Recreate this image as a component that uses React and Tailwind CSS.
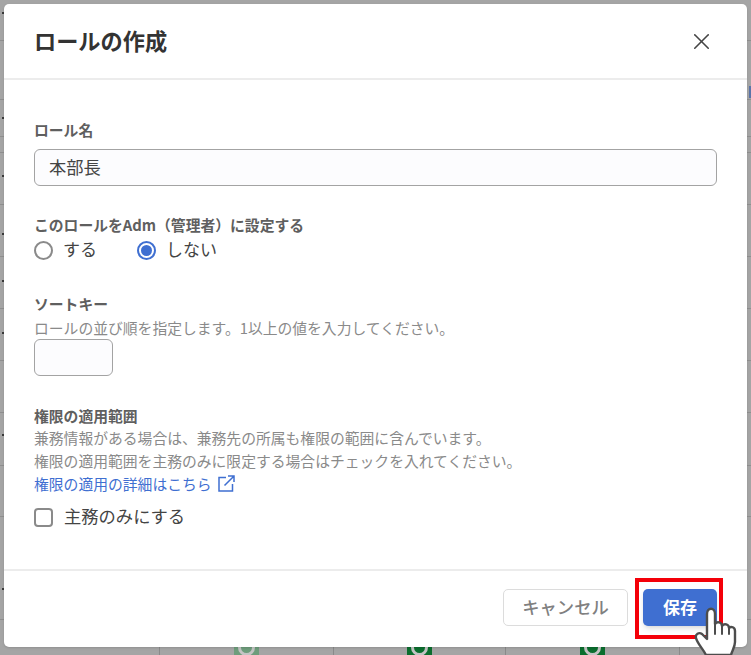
import { X } from "lucide-react";

const FONT = "[font-family:'Noto_Sans_CJK_JP','Noto_Sans',sans-serif]";
const ROW_LINES = [40, 99, 136, 152, 204, 256, 308, 360, 412, 465, 516, 619];
const MARKS = [12, 117, 175, 233, 280, 332, 434, 588];
const BADGES = [
  { left: "left-[234px]", color: "bg-[#6e9d7c]" },
  { left: "left-[407px]", color: "bg-[#0b6e2e]" },
  { left: "left-[580px]", color: "bg-[#0b6e2e]" },
];
const COLS = ["left-[159px]", "left-[333px]", "left-[505px]", "left-[679px]"];

function Label({ children }) {
  return <div className="text-[14.8px] leading-[20px] font-bold text-[#5f5f5f]">{children}</div>;
}

function Radio({ checked, label }) {
  return (
    <label className="flex items-center gap-[10px]">
      {checked ? (
        <span className="w-[19px] h-[19px] rounded-full border-2 border-[#3f6fd1] flex items-center justify-center">
          <span className="w-[11px] h-[11px] rounded-full bg-[#3f6fd1]" />
        </span>
      ) : (
        <span className="w-[19px] h-[19px] rounded-full border-2 border-[#8a8a8a]" />
      )}
      <span className="text-[17px] leading-[24px] text-[#444] -mt-[2px]">{label}</span>
    </label>
  );
}

function HandCursor() {
  return (
    <svg className="absolute left-[694px] top-[605px]" width="44" height="50" viewBox="0 0 44 50">
      <path
        d="M12 50 C9 44 3 38 2 33 C1 29 5 27 8 29 L13 34 L13 9 C13 2 21 2 21 9 L21 19 C23 16 28 17 28 21 C30 18 35 19 35 23 C37 21 41 22 41 26 L41 37 C41 42 38 46 37 50 Z"
        fill="#fff"
        stroke="#4d4d4d"
        strokeWidth="2.4"
        strokeLinejoin="round"
      />
      <path d="M21 19 V29 M28 21 V29 M35 23 V29" fill="none" stroke="#4d4d4d" strokeWidth="2" strokeLinecap="round" />
    </svg>
  );
}

function Backdrop() {
  return (
    <>
      {ROW_LINES.map((y) => (
        <div key={y} className="absolute left-0 w-full h-px bg-[#8f8f8f]" style={{ top: y }} />
      ))}
      {MARKS.map((y) => (
        <div key={y} className="absolute left-[2px] w-[2px] h-[2px] bg-[#3a3a3a]" style={{ top: y }} />
      ))}
      <div className="absolute left-[749px] top-[86px] w-[2px] h-[12px] bg-[#5a74a8]" />
      {COLS.map((left) => (
        <div key={left} className={`absolute ${left} top-[647px] w-px h-[8px] bg-[#8a8a8a]`} />
      ))}
      {BADGES.map((b) => (
        <div key={b.left} className={`absolute ${b.left} top-[647px] w-[25px] h-[8px] overflow-hidden ${b.color}`}>
          <div className="absolute left-[4px] -top-[8px] w-[17px] h-[17px] rounded-full border-[3px] border-[#c4c4c4]" />
        </div>
      ))}
    </>
  );
}

export default function App() {
  return (
    <div className={`relative w-[751px] h-[655px] overflow-hidden bg-[#a5a5a5] pt-[4px] pl-[4px] ${FONT}`}>
      <Backdrop />

      <div className="relative w-[743px] h-[643px] bg-white rounded-[5px] flex flex-col shadow-sm">
        <div className="h-[76px] shrink-0 border-b-2 border-[#ececec] flex items-center justify-between pl-[30px] pr-[32px]">
          <h1 className="text-[22.2px] leading-[30px] font-bold text-[#333] -mt-[3px]">ロールの作成</h1>
          <X size={27} strokeWidth={1.4} className="text-[#444]" />
        </div>

        <div className="flex-1 px-[30px] pt-[40px]">
          <Label>ロール名</Label>
          <div className="mt-[9px] h-[37px] w-[683px] rounded-[6px] border border-[#a3a3a3] bg-[#fcfcfe] pl-[14px] text-[17.3px] leading-[33px] text-[#444]">
            本部長
          </div>

          <div className="mt-[29px]">
            <Label>このロールをAdm（管理者）に設定する</Label>
          </div>
          <div className="flex gap-[40px] mt-[4px]">
            <Radio label="する" />
            <Radio checked label="しない" />
          </div>

          <div className="mt-[33px]">
            <Label>ソートキー</Label>
          </div>
          <p className="mt-[2px] text-[14.8px] leading-[23px] text-[#8a8a8a]">ロールの並び順を指定します。1以上の値を入力してください。</p>
          <div className="h-[37px] w-[79px] rounded-[6px] border border-[#a3a3a3] bg-[#fcfcfe]" />

          <div className="mt-[30px]">
            <Label>権限の適用範囲</Label>
          </div>
          <p className="text-[14.8px] leading-[23px] text-[#8a8a8a]">兼務情報がある場合は、兼務先の所属も権限の範囲に含んでいます。</p>
          <p className="text-[14.8px] leading-[23px] text-[#8a8a8a]">権限の適用範囲を主務のみに限定する場合はチェックを入れてください。</p>
          <a className="flex items-center gap-[6px] text-[14.8px] leading-[23px] text-[#3f6fd1]">
            権限の適用の詳細はこちら
            <svg width="17" height="17" viewBox="0 0 17 17" fill="none" stroke="#3f6fd1" strokeWidth="1.5">
              <path d="M8 2.5 H1 V16 H14.5 V9" />
              <path d="M6.5 10.5 L15.8 1.2 M10 1 H16 V7" />
            </svg>
          </a>
          <label className="flex items-center gap-[11px] mt-[11px]">
            <span className="w-[19px] h-[19px] rounded-[4px] border-2 border-[#8a8a8a]" />
            <span className="text-[17.3px] leading-[24px] text-[#444] -mt-[2px]">主務のみにする</span>
          </label>
        </div>

        <div className="h-[78px] shrink-0 border-t-2 border-[#ececec] flex items-start justify-end gap-[15px] pt-[18px] pr-[30px]">
          <button className="w-[125px] h-[37px] rounded-[5px] border border-[#dcdcdc] bg-white pb-[2px] text-[17.3px] font-medium text-[#808080]">
            キャンセル
          </button>
          <button className="w-[74px] h-[37px] rounded-[5px] bg-[#3f6fd1] pb-[2px] text-[17px] font-bold text-white shadow-md">
            保存
          </button>
        </div>
      </div>

      <div className="absolute left-[635px] top-[578px] w-[88px] h-[61px] border-[4px] border-[#f40009]" />
      <HandCursor />
    </div>
  );
}
